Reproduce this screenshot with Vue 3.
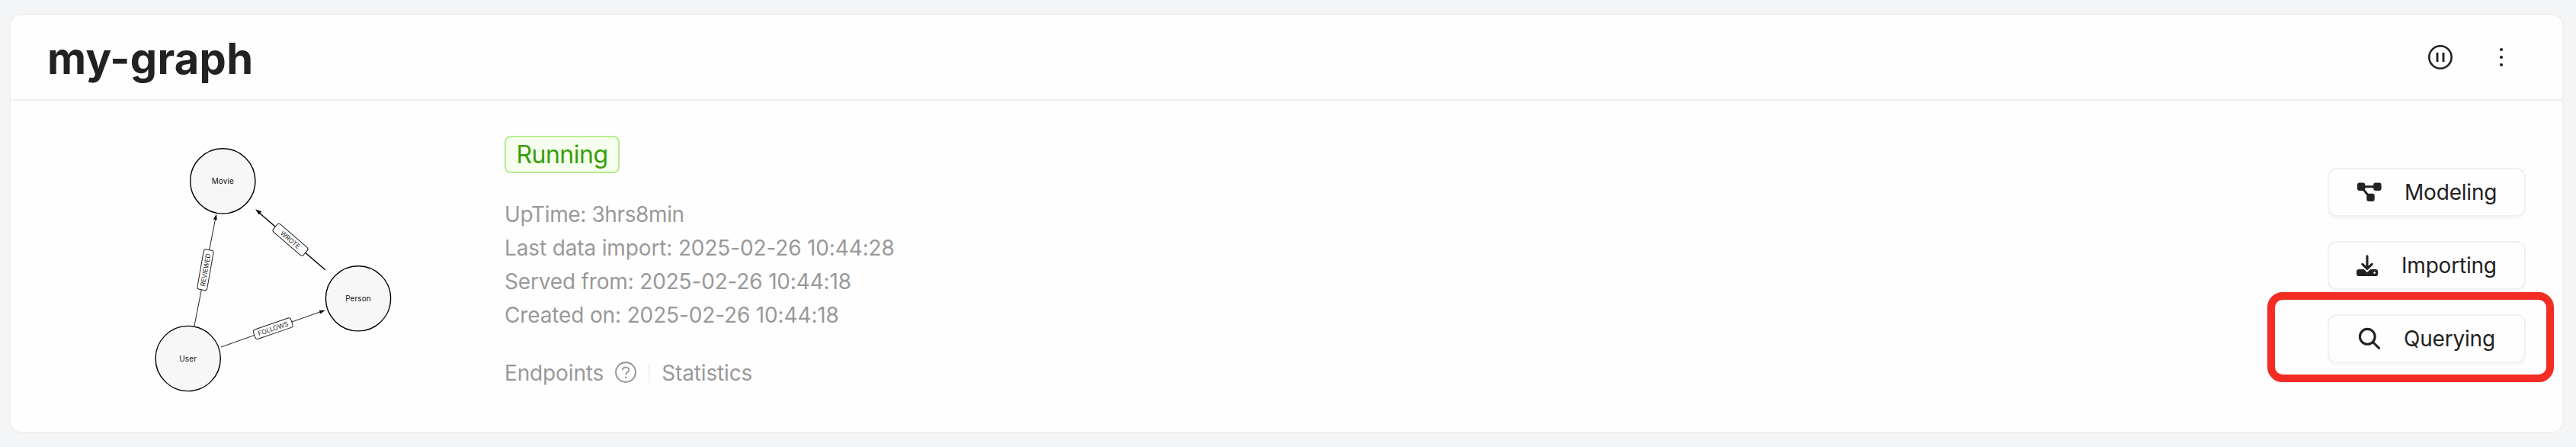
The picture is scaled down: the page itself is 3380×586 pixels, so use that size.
<script setup>
const info = [
  { key: 'uptime', text: 'UpTime: 3hrs8min' },
  { key: 'import', text: 'Last data import: 2025-02-26 10:44:28' },
  { key: 'served', text: 'Served from: 2025-02-26 10:44:18' },
  { key: 'created', text: 'Created on: 2025-02-26 10:44:18' },
]
const nodes = [
  { name: 'Movie', x: 292.3, y: 237.3 },
  { name: 'Person', x: 470, y: 391.3 },
  { name: 'User', x: 246.7, y: 470 },
]
</script>

<template>
  <main class="page">
    <section class="card">
      <header class="head">
        <h1 class="title">my-graph</h1>
        <div class="head-actions">
          <svg width="36" height="36" viewBox="0 0 36 36" fill="none" stroke="#222" stroke-width="2.6">
            <circle cx="18" cy="18" r="14.7" />
            <path d="M14 12v12M22 12v12" stroke-width="2.9" />
          </svg>
          <svg width="36" height="36" viewBox="0 0 36 36" fill="#222">
            <circle cx="18" cy="8" r="2.1" /><circle cx="18" cy="18" r="2.1" /><circle cx="18" cy="28" r="2.1" />
          </svg>
        </div>
      </header>
      <div class="body">
        <svg class="graph" width="360" height="380" viewBox="190 160 360 380">
          <g stroke="#222" stroke-width="1" fill="#111">
            <path d="M255 427L283 285" />
            <path d="M284 280.5l-4.2 6.9 5 1z" stroke="none" />
            <path d="M290 455L421 408.5" />
            <path d="M427 406.5l-8.3.4 1.7 4.6z" stroke="none" />
            <path d="M426.7 353.7L339 278" stroke="#000" stroke-width="1.5" />
            <path d="M335 274.3l4.7 7.2 3.7-4.3z" stroke="none" />
          </g>
          <g class="edge" transform="translate(269.5 353.7) rotate(-80)">
            <rect x="-26.5" y="-6.5" width="53" height="13" rx="3" /><text y="3.1">REVIEWED</text>
          </g>
          <g class="edge" transform="translate(358.3 430.7) rotate(-19)">
            <rect x="-26" y="-6.5" width="52" height="13" rx="3" /><text y="3.1">FOLLOWS</text>
          </g>
          <g class="edge" transform="translate(381 314.3) rotate(40.7)">
            <rect x="-26" y="-6.7" width="52" height="13.4" rx="3" /><text y="3.1">WROTE</text>
          </g>
          <g v-for="n in nodes" :key="n.name" class="node">
            <circle :cx="n.x" :cy="n.y" r="42.6" /><text :x="n.x" :y="n.y + 3.7">{{ n.name }}</text>
          </g>
        </svg>
        <div class="details">
          <span class="tag">Running</span>
          <ul class="info">
            <li v-for="i in info" :key="i.key" :class="i.key">{{ i.text }}</li>
          </ul>
          <div class="links">
            <span>Endpoints</span>
            <svg width="30" height="30" viewBox="0 0 30 30" fill="none" stroke="#999" stroke-width="2.1">
              <circle cx="15" cy="15" r="12.9" />
              <path d="M10.8 12.2c0-2.3 1.9-3.7 4.2-3.7s4.2 1.5 4.2 3.7c0 2.9-4 3.1-4 5.9v.4" stroke-width="1.9" />
              <circle cx="15.1" cy="21.7" r="1.3" fill="#999" stroke="none" />
            </svg>
            <i class="divider"></i>
            <span>Statistics</span>
          </div>
        </div>
        <nav class="actions">
          <button class="btn modeling">
            <svg width="36" height="36" viewBox="0 0 36 36" fill="#222">
              <rect x="3" y="5.6" width="10.3" height="10.3" rx="3" />
              <rect x="24.2" y="5.6" width="10.4" height="10.3" rx="3" />
              <rect x="15.3" y="19.7" width="10.4" height="10.4" rx="3" />
              <path d="M10 10.7h18M9.5 12.5l9 11" stroke="#222" stroke-width="2.9" />
            </svg>
            <span>Modeling</span>
          </button>
          <button class="btn importing">
            <svg width="36" height="36" viewBox="0 0 36 36" fill="none" stroke="#222">
              <rect x="2" y="23" width="28.2" height="9.1" rx="3.4" fill="#222" stroke="none" />
              <path d="M9.8 17.6l6.2 6 6.2-6" stroke="#fff" stroke-width="5" />
              <path d="M16 5.7v16.8M9.8 16.3l6.2 6.1 6.2-6.1" stroke-width="3.1" stroke-linecap="round" stroke-linejoin="round" />
              <circle cx="25.7" cy="27.6" r="1.4" fill="#fff" stroke="none" />
            </svg>
            <span>Importing</span>
          </button>
          <button class="btn querying">
            <svg width="36" height="36" viewBox="0 0 36 36" fill="none" stroke="#222" stroke-width="3.1">
              <circle cx="16.3" cy="15.3" r="9.9" /><path d="M23.5 22.5l8 7.8" stroke-linecap="round" />
            </svg>
            <span>Querying</span>
          </button>
          <div class="highlight"></div>
        </nav>
      </div>
    </section>
  </main>
</template>

<style>
body { margin: 0; background: #f4f5f7; }
</style>

<style scoped>
.page { box-sizing: border-box; height: 586px; padding: 18px 16px 18px 12px; background: #f4f5f7; font-family: Inter, "Liberation Sans", sans-serif; color: #222; }
.card { box-sizing: border-box; height: 550px; border: 2px solid #f0f0f0; border-radius: 16px; background: #fefefe; display: flex; flex-direction: column; }
.head { box-sizing: border-box; height: 112px; border-bottom: 2px solid #f0f0f0; display: flex; align-items: center; justify-content: space-between; padding: 0 62px 0 48px; }
.title { margin: 0; padding-top: 3px; font-size: 56px; font-weight: 700; line-height: 72px; letter-spacing: .3px; }
.head-actions { display: flex; gap: 44px; }
.body { flex: 1; display: flex; }
.graph { margin: 28px 0 0 176px; display: block; }
.details { margin: 46px 0 0 112px; font-size: 28px; line-height: 44px; color: #999; letter-spacing: -.14px; }
.tag { box-sizing: border-box; display: flex; align-items: center; justify-content: center; width: 151px; height: 49px; border: 2px solid #b7eb8f; border-radius: 8px; background: #f6ffed; color: #389e0d; font-size: 32px; letter-spacing: -.5px; }
.info { list-style: none; margin: 32px 0 0; padding: 0; }
.uptime { letter-spacing: -.38px; }
.served { letter-spacing: -.17px; }
.links { display: flex; align-items: center; margin-top: 32px; }
.links svg { margin: 0 15px 2px 14px; }
.divider { width: 2px; height: 25px; background: #f0f0f0; margin-right: 15px; }
.actions { position: relative; margin: 88px 48px 0 auto; display: flex; flex-direction: column; gap: 32px; }
.btn { box-sizing: border-box; width: 260px; height: 64px; border: 2px solid #f0f0f0; border-radius: 12px; background: #fefefe; box-shadow: 0 4px 0 rgba(0, 0, 0, .02); padding: 0 0 0 34px; display: flex; align-items: center; font: 28px Inter, sans-serif; letter-spacing: -.2px; color: #222; white-space: nowrap; }
.modeling span { margin-left: 29px; }
.importing span { margin-left: 25px; }
.querying span { margin-left: 28px; }
.highlight { position: absolute; box-sizing: border-box; left: -79px; top: 163px; width: 376px; height: 118px; border: 10px solid #f32c24; border-radius: 20px; }
.edge rect { fill: #fff; stroke: #222; stroke-width: 1; }
.edge text { font-size: 8.5px; text-anchor: middle; fill: #222; }
.node circle { fill: #f7f7f7; stroke: #000; stroke-width: 1.4; }
.node text { font-size: 10px; text-anchor: middle; fill: #111; letter-spacing: .1px; }
</style>
